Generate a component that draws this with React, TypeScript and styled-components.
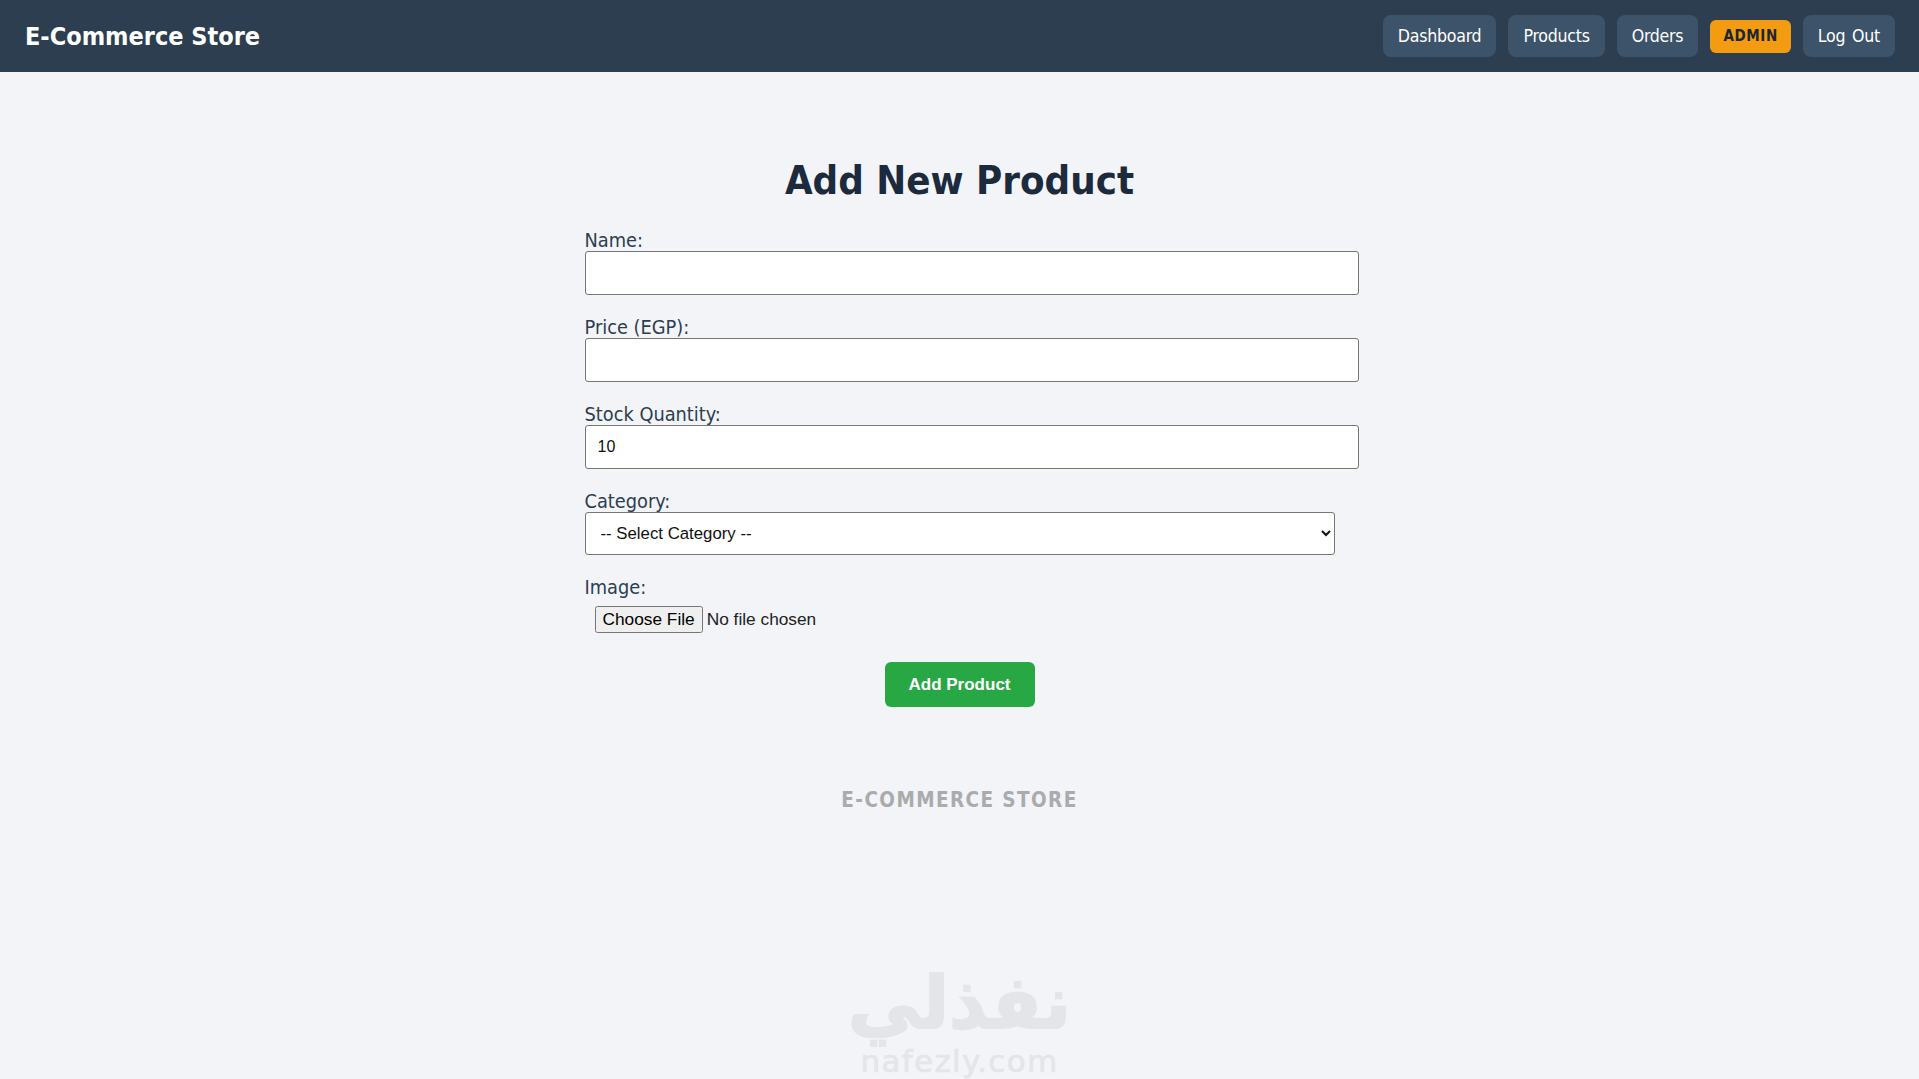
import styled, { createGlobalStyle } from 'styled-components'

const GlobalStyle = createGlobalStyle`
	html, body {
		margin: 0;
		height: 100%;
		overflow: hidden;
		background: #f2f4f8;
	}
	body {
		font-family: "DejaVu Sans Condensed", "DejaVu Sans", Tahoma, sans-serif;
		font-stretch: condensed;
		color: #2c3e50;
	}
	* {
		box-sizing: border-box;
	}
`

const Page = styled.div`
	position: relative;
	height: 1079px;
	overflow: hidden;
`

const Navbar = styled.header`
	display: flex;
	align-items: center;
	justify-content: space-between;
	height: 72px;
	padding: 0 24px 0 25px;
	background: #2c3e50;
`

const Brand = styled.div`
	color: #fff;
	font-size: 25px;
	font-weight: 700;
`

const NavLinks = styled.nav`
	display: flex;
	align-items: center;
	gap: 12px;
`

const NavLink = styled.a`
	display: flex;
	align-items: center;
	height: 42px;
	padding: 0 15px;
	border-radius: 8px;
	background: #3d5369;
	color: #fff;
	font-size: 17.6px;
	letter-spacing: -0.25px;
	word-spacing: 2px;
`

const RoleBadge = styled.span`
	display: flex;
	align-items: center;
	height: 33px;
	padding: 0 13px;
	border-radius: 6px;
	background: #f39c12;
	color: #1b2631;
	font-size: 15px;
	font-weight: 700;
	letter-spacing: 0.6px;
`

const Container = styled.main`
	width: 750px;
	margin: 0 auto;
	padding-top: 83px;
`

const Title = styled.h1`
	margin: 0 0 23px;
	color: #1b2a3d;
	font-size: 39.8px;
	line-height: 50px;
	font-weight: 700;
	text-align: center;
`

const Form = styled.form`
	display: flex;
	flex-direction: column;
	gap: 20px;
`

const Field = styled.div`
	display: flex;
	flex-direction: column;
	align-items: flex-start;
`

const Label = styled.label`
	padding-top: 3px;
	font-size: 19.8px;
	line-height: 20px;
	color: #2c3e50;
`

const TextInput = styled.input`
	width: 774px;
	height: 44px;
	padding: 0 12px;
	border: 1px solid #767676;
	border-radius: 3px;
	background: #fff;
	color: #111;
	font-family: "Liberation Sans", Arial, sans-serif;
	font-size: 16px;
	font-stretch: normal;
`

const Select = styled.select`
	width: 750px;
	height: 43px;
	padding: 0 11px;
	border: 1px solid #767676;
	border-radius: 3px;
	background: #fff;
	color: #111;
	font-family: "Liberation Sans", Arial, sans-serif;
	font-size: 16.8px;
	font-stretch: normal;
`

const FileInput = styled.input`
	margin: 8px 0 0 10px;
	color: #222;
	font-family: "Liberation Sans", Arial, sans-serif;
	font-size: 17.3px;
	font-stretch: normal;
`

const SubmitButton = styled.button`
	align-self: center;
	width: 150px;
	height: 45px;
	margin-top: 9px;
	border: none;
	border-radius: 6px;
	background: #28a745;
	color: #fff;
	font-family: "Liberation Sans", Arial, sans-serif;
	font-size: 17px;
	font-weight: 700;
	font-stretch: normal;
`

const Footer = styled.footer`
	margin-top: 81px;
	color: #a9abad;
	font-size: 20.5px;
	font-weight: 700;
	letter-spacing: 1.4px;
	text-align: center;
`

const Watermark = styled.div`
	position: absolute;
	left: 0;
	right: 0;
	bottom: 0;
	display: flex;
	flex-direction: column;
	align-items: center;
	color: #e3e5e8;
	pointer-events: none;
`

const WatermarkArabic = styled.div`
	font-family: "DejaVu Sans", sans-serif;
	font-stretch: normal;
	font-size: 73px;
	line-height: 80px;
	font-weight: 700;
	-webkit-text-stroke: 2px #e3e5e8;
`

const WatermarkLatin = styled.div`
	font-family: "DejaVu Sans", sans-serif;
	font-stretch: normal;
	font-size: 31px;
	line-height: 36px;
	font-weight: 400;
	letter-spacing: 1.3px;
	-webkit-text-stroke: 0.6px #e3e5e8;
`

export default function App() {
	return (
		<Page>
			<GlobalStyle />
			<Navbar>
				<Brand>E-Commerce Store</Brand>
				<NavLinks>
					<NavLink>Dashboard</NavLink>
					<NavLink>Products</NavLink>
					<NavLink>Orders</NavLink>
					<RoleBadge>ADMIN</RoleBadge>
					<NavLink>Log Out</NavLink>
				</NavLinks>
			</Navbar>
			<Container>
				<Title>Add New Product</Title>
				<Form onSubmit={(e) => e.preventDefault()}>
					<Field>
						<Label htmlFor="name">Name:</Label>
						<TextInput id="name" type="text" />
					</Field>
					<Field>
						<Label htmlFor="price">Price (EGP):</Label>
						<TextInput id="price" type="text" />
					</Field>
					<Field>
						<Label htmlFor="stock">Stock Quantity:</Label>
						<TextInput id="stock" type="text" defaultValue="10" />
					</Field>
					<Field>
						<Label htmlFor="category">Category:</Label>
						<Select id="category" defaultValue="">
							<option value="">-- Select Category --</option>
						</Select>
					</Field>
					<Field>
						<Label htmlFor="image">Image:</Label>
						<FileInput id="image" type="file" />
					</Field>
					<SubmitButton type="submit">Add Product</SubmitButton>
				</Form>
				<Footer>E-COMMERCE STORE</Footer>
			</Container>
			<Watermark>
				<WatermarkArabic>نفذلي</WatermarkArabic>
				<WatermarkLatin>nafezly.com</WatermarkLatin>
			</Watermark>
		</Page>
	)
}
